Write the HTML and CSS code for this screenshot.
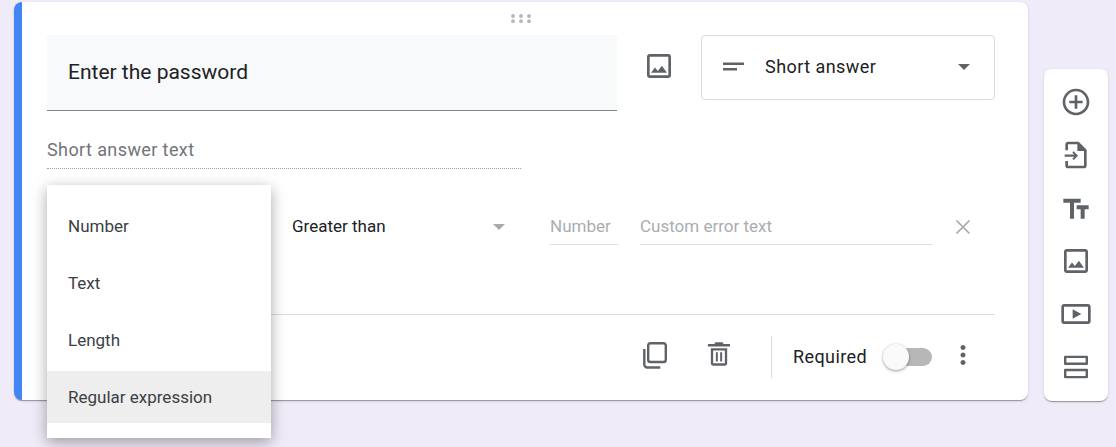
FILE: index.html
```html
<!DOCTYPE html>
<html lang="en">
<head>
<meta charset="utf-8">
<title>Form question</title>
<link rel="stylesheet" href="styles.css">
</head>
<body>
<main class="page">
  <section class="card">
    <svg class="drag" viewBox="0 0 20 9" aria-hidden="true"><circle cx="2" cy="2" r="1.9"/><circle cx="10" cy="2" r="1.9"/><circle cx="18" cy="2" r="1.9"/><circle cx="2" cy="7.2" r="1.9"/><circle cx="10" cy="7.2" r="1.9"/><circle cx="18" cy="7.2" r="1.9"/></svg>
    <div class="head">
      <div class="title">Enter the password</div>
      <svg class="img-ic" viewBox="0 0 24 24"><path d="M19 5v14H5V5h14m0-2H5c-1.100 0-2 .9-2 2v14c0 1.100.9 2 2 2h14c1.100 0 2-.9 2-2V5c0-1.100-.9-2-2-2zm-4.860 8.860l-3 3.870L9 13.140 6 17h12l-3.860-5.140z"/></svg>
      <div class="type">
        <svg class="type-ic" viewBox="0 0 24 24"><path d="M2 7.500h21V10H2zm0 5.500h14v2.500H2z"/></svg>
        <span class="type-label">Short answer</span>
        <span class="caret"></span>
      </div>
    </div>
    <div class="desc">Short answer text</div>
    <div class="rule">
      <div class="cond">Greater than<span class="caret light"></span></div>
      <div class="field num">Number</div>
      <div class="field err">Custom error text</div>
      <svg class="close" viewBox="0 0 16 16"><path d="M1.500 1.500l13 13m0-13l-13 13"/></svg>
    </div>
    <div class="divider"></div>
    <div class="foot">
      <svg class="copy" viewBox="0 0 24 27"><path d="M7.500 1.200h13a2.300 2.300 0 0 1 2.300 2.300v14.200a2.300 2.300 0 0 1-2.300 2.300h-13a2.300 2.300 0 0 1-2.300-2.300V3.500a2.300 2.300 0 0 1 2.300-2.300zM1.300 7v15.500a3 3 0 0 0 3 3h13"/></svg>
      <svg class="trash" viewBox="0 0 24 24"><path d="M5 7h14v13c0 1.100-.9 2-2 2H7c-1.100 0-2-.9-2-2V7zm2 2v11h10V9H7zm2.300 1.500h1.700v8H9.300zm3.700 0h1.700v8H13zM2.500 3.500H8l1-1.500h6l1 1.500h5.500v2h-19z"/></svg>
      <span class="vline"></span>
      <span class="req">Required</span>
      <span class="toggle"><span class="knob"></span></span>
      <svg class="more" viewBox="0 0 24 24"><path d="M12 8c1.100 0 2-.9 2-2s-.9-2-2-2-2 .9-2 2 .9 2 2 2zm0 2c-1.100 0-2 .9-2 2s.9 2 2 2 2-.9 2-2-.9-2-2-2zm0 6c-1.100 0-2 .9-2 2s.9 2 2 2 2-.9 2-2-.9-2-2-2z"/></svg>
    </div>
    <ul class="menu">
      <li>Number</li>
      <li>Text</li>
      <li>Length</li>
      <li class="active">Regular expression</li>
    </ul>
  </section>
  <aside class="side">
    <svg viewBox="0 0 24 24"><path d="M13 7h-2v4H7v2h4v4h2v-4h4v-2h-4V7zm-1-5C6.480 2 2 6.480 2 12s4.480 10 10 10 10-4.480 10-10S17.520 2 12 2zm0 18c-4.410 0-8-3.590-8-8s3.590-8 8-8 8 3.590 8 8-3.590 8-8 8z"/></svg>
    <svg viewBox="0 0 24 24"><path d="M14 2H6c-1.100 0-2 .9-2 2v4.500h2V4h7v5h5v11H6v-3.500H4V20c0 1.100.9 2 2 2h12c1.100 0 2-.9 2-2V8l-6-6zM3.500 11.700v1.600h7.200l-1.500 1.500 1.100 1 3.200-3.300-3.200-3.300-1.100 1 1.500 1.500z"/></svg>
    <svg viewBox="0 0 24 24"><path d="M2.500 5v3h5v12h3V8h5V5h-13zm19 5h-9v3h3v7h3v-7h3v-3z"/></svg>
    <svg viewBox="0 0 24 24"><path d="M19 5v14H5V5h14m0-2H5c-1.100 0-2 .9-2 2v14c0 1.100.9 2 2 2h14c1.100 0 2-.9 2-2V5c0-1.100-.9-2-2-2zm-4.860 8.860l-3 3.870L9 13.140 6 17h12l-3.860-5.140z"/></svg>
    <svg viewBox="0 0 24 24"><path d="M21 4.500H3c-1.100 0-2 .9-2 2v11c0 1.100.9 2 2 2h18c1.100 0 2-.9 2-2v-11c0-1.100-.9-2-2-2zm0 13H3v-11h18v11zM9.500 8.500v7l6.500-3.500z"/></svg>
    <svg class="section-ic" viewBox="0 0 24 24"><path d="M3.800 3.500h16.400a.8.8 0 0 1 .8.8v5.400a.8.8 0 0 1-.8.8H3.800a.8.8 0 0 1-.8-.8V4.300a.8.8 0 0 1 .8-.8zm1 1.800v3.400h14.400V5.300zM3.800 13.300h16.400a.8.8 0 0 1 .8.8v5.600a.8.8 0 0 1-.8.8H3.800a.8.8 0 0 1-.8-.8v-5.600a.8.8 0 0 1 .8-.8zm1 1.800v3.600h14.400v-3.600z"/></svg>
  </aside>
</main>
</body>
</html>
```
FILE: styles.css
```css
* { box-sizing: border-box; }
html, body { margin: 0; height: 100%; }
body {
  background: #f0ebf8;
  font-family: Roboto, "Liberation Sans", sans-serif;
  color: #202124;
  overflow: hidden;
}
svg { fill: #5f6368; display: block; flex: none; }
.page {
  display: flex;
  align-items: flex-start;
  gap: 16px;
  padding: 2px 0 0 14px;
}
.card {
  position: relative;
  width: 1014px;
  height: 398px;
  flex: none;
  background: #fff;
  border-radius: 8px;
  border-left: 8px solid #4285f4;
  padding: 0 33px 0 25px;
  box-shadow: 0 2px 1px -1px rgba(0,0,0,.2), 0 1px 1px rgba(0,0,0,.14), 0 1px 3px rgba(0,0,0,.12);
}
.drag {
  position: absolute;
  left: 489px;
  top: 12px;
  width: 20px;
  height: 9px;
  fill: #b4b7bb;
}
.head {
  display: flex;
  align-items: flex-start;
  padding-top: 33px;
}
.title {
  width: 570px;
  height: 76px;
  flex: none;
  background: #f8f9fa;
  border-bottom: 1px solid #80868b;
  padding: 0 0 2px 21px;
  display: flex;
  align-items: center;
  font-size: 21px;
}
.img-ic {
  width: 32px;
  height: 32px;
  margin: 15px 26px 0 26px;
}
.type {
  width: 294px;
  height: 65px;
  flex: none;
  border: 1px solid #dadce0;
  border-radius: 4px;
  display: flex;
  align-items: center;
  padding: 0 24px 2px 19px;
}
.type-ic { width: 24px; height: 24px; }
.type-label {
  margin-left: 20px;
  font-size: 18px;
  letter-spacing: .45px;
  flex: 1;
}
.caret {
  width: 0;
  height: 0;
  border-left: 6.5px solid transparent;
  border-right: 6.5px solid transparent;
  border-top: 6.5px solid #5f6368;
}
.desc {
  width: 474px;
  height: 35px;
  margin-top: 23px;
  border-bottom: 1px dotted #9aa0a6;
  font-size: 18px;
  letter-spacing: .4px;
  color: #70757a;
  line-height: 30px;
  padding-top: 1px;
}
.rule {
  display: flex;
  align-items: flex-start;
  height: 145px;
  padding: 37px 0 0 245px;
}
.cond {
  width: 213px;
  height: 40px;
  flex: none;
  display: flex;
  justify-content: space-between;
  font-size: 17px;
  line-height: 40px;
}
.caret.light { border-top-color: #a9a9a9; margin: 18px 0 0 0; }
.field {
  height: 39px;
  flex: none;
  border-bottom: 1px solid #e0e0e0;
  color: #a9adb1;
  font-size: 17px;
  line-height: 40px;
}
.num { width: 68px; margin-left: 45px; }
.err { width: 292px; margin-left: 22px; }
.close {
  width: 16px;
  height: 16px;
  margin: 13px 0 0 23px;
  fill: none;
  stroke: #a6a6a6;
  stroke-width: 1.6;
}
.divider { height: 1px; background: #dadce0; }
.foot {
  height: 84px;
  display: flex;
  align-items: center;
  padding-left: 596px;
}
.copy {
  width: 24px;
  height: 27px;
  fill: none;
  stroke: #5f6368;
  stroke-width: 2.4;
  margin-top: -4px;
}
.trash { width: 28px; height: 28px; margin: -7px 0 0 38px; }
.vline { width: 1px; height: 42px; background: #dadce0; margin: 0 0 0 38px; }
.req { margin: -2px 0 0 21px; font-size: 18px; letter-spacing: .4px; }
.toggle {
  position: relative;
  width: 33px;
  height: 18px;
  margin-left: 32px;
  background: #b7b7b7;
  border-radius: 9px;
}
.knob {
  position: absolute;
  left: -16px;
  top: -4px;
  width: 26px;
  height: 26px;
  border-radius: 50%;
  background: #fafafa;
  box-shadow: 0 1px 3px rgba(0,0,0,.4);
}
.more { width: 30px; height: 30px; margin: -5px 0 0 16px; }
.menu {
  position: absolute;
  left: 25px;
  top: 183px;
  width: 224px;
  height: 253px;
  margin: 0;
  padding: 15px 0 0;
  list-style: none;
  background: #fff;
  box-shadow: 0 4px 14px rgba(0,0,0,.35);
  display: flex;
  flex-direction: column;
  gap: 5px;
}
.menu li {
  height: 52px;
  padding-left: 21px;
  font-size: 17px;
  line-height: 52px;
  color: #3c4043;
}
.menu .active { background: #eeeeee; }
.side {
  margin-top: 67px;
  width: 64px;
  height: 332px;
  background: #fff;
  border-radius: 8px;
  box-shadow: 0 2px 1px -1px rgba(0,0,0,.2), 0 1px 1px rgba(0,0,0,.14), 0 1px 3px rgba(0,0,0,.12);
  padding-top: 17px;
  display: flex;
  flex-direction: column;
  align-items: center;
  gap: 21px;
}
.side svg { width: 32px; height: 32px; }
```
